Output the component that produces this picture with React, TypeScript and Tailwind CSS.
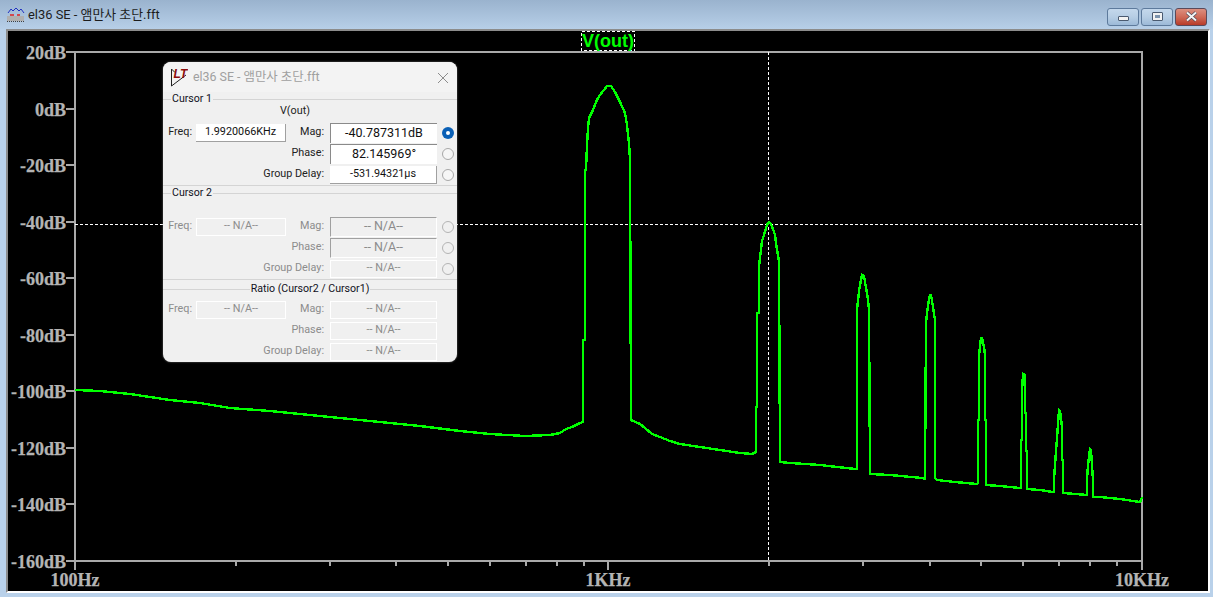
const yTicks = [
  ["20dB", 52],
  ["0dB", 108.6],
  ["-20dB", 165.1],
  ["-40dB", 221.7],
  ["-60dB", 278.2],
  ["-80dB", 334.8],
  ["-100dB", 391.3],
  ["-120dB", 447.9],
  ["-140dB", 504.4],
  ["-160dB", 561],
] as const;

const xTicks = [236, 330, 396, 448, 490, 526, 557, 584, 769, 863, 930, 981, 1023, 1059, 1090, 1117];

const trace = [
  [75, 390], [100, 391], [130, 394], [170, 400], [200, 403], [230, 408], [270, 411], [320, 416],
  [370, 421], [420, 426], [460, 431], [490, 434], [525, 436], [550, 435], [560, 433], [563, 431],
  [566, 429], [572, 427], [578, 424], [583, 422],
  [583, 340], [585, 340], [585, 170], [586, 170], [587, 145], [588, 128], [589, 118], [593, 110],
  [597, 100], [600, 95], [607, 86], [611, 86], [615, 92], [620, 102], [625, 113], [627, 125],
  [629, 143], [630, 160], [631, 420],
  [640, 424], [645, 428], [652, 434], [660, 437], [670, 441], [680, 444], [700, 447], [720, 450],
  [740, 453], [752, 454], [756, 452],
  [756, 407], [757, 407], [757, 313], [759, 313], [759, 266], [760, 258], [762, 241], [764, 235],
  [766, 228], [768, 223], [769, 222], [771, 224], [773, 229], [775, 235], [776, 243], [777, 250],
  [778, 255], [779, 262], [780, 462],
  [790, 463], [820, 465], [855, 469],
  [857, 469], [857, 309], [858, 301], [859, 291], [860, 285], [861, 280], [862, 275], [864, 276],
  [865, 282], [867, 293], [868, 300], [869, 310], [870, 474],
  [890, 475], [922, 478], [925, 479],
  [926, 322], [927, 314], [928, 305], [929, 300], [930, 295], [931, 295], [932, 301], [933, 307],
  [934, 314], [935, 320], [935, 478],
  [937, 480], [955, 482], [977, 484],
  [978, 483], [978, 420], [979, 420], [979, 355], [980, 347], [981, 338], [982, 338], [983, 342],
  [984, 347], [985, 355], [985, 420], [986, 420], [986, 485],
  [1000, 486], [1020, 488],
  [1021, 488], [1021, 440], [1022, 440], [1022, 391], [1023, 374], [1025, 375], [1025, 413],
  [1026, 413], [1026, 451], [1027, 451], [1027, 489],
  [1040, 490], [1053, 492],
  [1054, 492], [1054, 479], [1055, 465], [1056, 451], [1057, 438], [1058, 424], [1059, 410],
  [1060, 411], [1061, 419], [1062, 427], [1062, 460], [1063, 460], [1063, 493],
  [1075, 494], [1087, 495],
  [1087, 480], [1088, 465], [1090, 449], [1091, 450], [1092, 465], [1093, 481], [1093, 497],
  [1100, 497], [1120, 499], [1140, 502], [1141, 500], [1142, 497],
];

const tracePoints = trace.map((p) => p.join(",")).join(" ");

function AxisLabel({ x, y, anchor, children }: { x: number; y: number; anchor: "end" | "middle"; children: string }) {
  return (
    <text x={x} y={y} textAnchor={anchor} fill="#b4b4b4" stroke="#b4b4b4" strokeWidth="0.25" fontSize="18" fontWeight="700" fontFamily="'Liberation Serif', serif">
      {children}
    </text>
  );
}

function Plot() {
  return (
    <svg viewBox="8 31 1200 560" className="block w-[1200px] h-[560px]">
      <g fill="none" stroke="#a9a9a9" strokeWidth="2" shapeRendering="crispEdges">
        <rect x="75" y="52" width="1067" height="509" />
        <path d="M75 52V570M608 561V570M1142 561V570" />
        {yTicks.map(([label, y]) => (
          <path key={label} d={`M66 ${y}H75`} />
        ))}
        {xTicks.map((x) => (
          <path key={x} d={`M${x} 561V566`} />
        ))}
      </g>
      {yTicks.map(([label, y]) => (
        <AxisLabel key={label} x={66} y={y + 7} anchor="end">
          {label}
        </AxisLabel>
      ))}
      <AxisLabel x={75} y={586} anchor="middle">100Hz</AxisLabel>
      <AxisLabel x={608} y={586} anchor="middle">1KHz</AxisLabel>
      <AxisLabel x={1142} y={586} anchor="middle">10KHz</AxisLabel>

      <path d="M75 224H1142M768.5 52V561" fill="none" stroke="#fff" strokeWidth="1" strokeDasharray="3 2" shapeRendering="crispEdges" />
      <polyline points={tracePoints} fill="none" stroke="#00ff00" strokeWidth="2.4" shapeRendering="crispEdges" />

      <rect x="581.5" y="31.5" width="53" height="19" fill="none" stroke="#fff" strokeDasharray="3 2" shapeRendering="crispEdges" />
      <text x="608" y="47" textAnchor="middle" fill="#00ff00" fontSize="18" fontWeight="700" fontFamily="'Liberation Sans', sans-serif">
        V(out)
      </text>
    </svg>
  );
}

function WindowButton({ kind }: { kind: "min" | "max" | "close" }) {
  if (kind === "close") {
    return (
      <div className="w-[32px] h-[18px] rounded-[3px] border border-[#5a4a5a] bg-gradient-to-b from-[#dc8f80] via-[#cf6a58] to-[#b83a28] flex items-center justify-center">
        <svg width="13" height="11" viewBox="0 0 13 11">
          <path d="M2 1.5L11 9.5M11 1.5L2 9.5" stroke="#4a4a5a" strokeWidth="3.4" />
          <path d="M2 1.5L11 9.5M11 1.5L2 9.5" stroke="#f4f4f4" strokeWidth="2" />
        </svg>
      </div>
    );
  }
  return (
    <div className="w-[32px] h-[18px] rounded-[3px] border border-[#5d7a9c] bg-gradient-to-b from-[#c4d8ec] via-[#b6cde4] to-[#9cb9d8] flex items-center justify-center">
      {kind === "min" ? (
        <div className="w-[11px] h-[5px] mt-[3px] rounded-[1px] bg-[#f2f2f2] border border-[#4a5a70]" />
      ) : (
        <div className="w-[11px] h-[9px] rounded-[1px] bg-[#f2f2f2] border border-[#4a5a70] flex items-center justify-center">
          <div className="w-[5px] h-[3px] bg-[#7d94ae]" />
        </div>
      )}
    </div>
  );
}

function AppIcon() {
  return (
    <svg width="18" height="15" viewBox="0 0 18 15">
      <rect x="0" y="9" width="17" height="5" fill="#b0b0b0" />
      <path d="M0 14.5H17" stroke="#404040" strokeDasharray="1 1" />
      <path d="M1 6L4 2L6 4L9 1L12 4L14 2L17 6" fill="none" stroke="#2030c0" />
      <path d="M3 8H7M10 8H13" stroke="#e02020" strokeWidth="1.5" />
    </svg>
  );
}

function DialogIcon() {
  return (
    <svg width="17" height="19" viewBox="0 0 17 19">
      <path d="M0.5 1V18L15 7" fill="none" stroke="#202020" />
      <path d="M0.5 1L4 4.5" fill="none" stroke="#202020" />
      <text x="2.5" y="10" fontSize="12" fontWeight="700" fontStyle="italic" fill="#8c0c0c" fontFamily="'Liberation Sans', sans-serif">
        LT
      </text>
    </svg>
  );
}

type FieldKind = "raised" | "sunken" | "offRaised" | "offSunken";

function Field({ kind, wide, children }: { kind: FieldKind; wide?: boolean; children: string }) {
  const styles: Record<FieldKind, string> = {
    raised: "h-[18px] bg-white text-[#111] text-[10.8px] border-r border-b border-[#a0a0a0]",
    sunken: "h-[20px] bg-white text-[#111] text-[12.5px] border-t border-l border-[#8a8a8a]",
    offRaised: "h-[18px] bg-[#f0f0f0] text-[#8c8c8c] text-[10.8px] border border-white",
    offSunken: "h-[20px] bg-[#f0f0f0] text-[#8c8c8c] text-[12.5px] border-t border-l border-[#a0a0a0] border-r-white border-b-white border-r border-b",
  };
  return (
    <div className={`${wide ? "w-[107px]" : "w-[90px]"} flex items-center justify-center whitespace-nowrap ${styles[kind]}`}>
      {children}
    </div>
  );
}

function Radio({ state }: { state?: "on" | "off" | "disabled" }) {
  if (!state) return <div className="w-[12px] ml-[5px]" />;
  if (state === "on") {
    return (
      <div className="w-[12px] h-[12px] ml-[5px] rounded-full bg-[#0a60b6] flex items-center justify-center">
        <div className="w-[4px] h-[4px] rounded-full bg-white" />
      </div>
    );
  }
  return (
    <div className={`w-[12px] h-[12px] ml-[5px] rounded-full border ${state === "off" ? "bg-[#f6f6f6] border-[#a8a8a8]" : "bg-[#f0f0f0] border-[#b4b4b4]"}`} />
  );
}

function Row({ label, off, leftKind, leftValue, kind, value, radio }: {
  label: string;
  off: boolean;
  leftKind?: FieldKind;
  leftValue?: string;
  kind: FieldKind;
  value: string;
  radio?: "on" | "off" | "disabled";
}) {
  const textColor = off ? "text-[#8c8c8c]" : "text-[#222]";
  return (
    <div className="h-[21px] flex items-center text-[10.8px]">
      <div className={`w-[29px] text-right ${textColor}`}>{leftKind ? "Freq:" : ""}</div>
      <div className="w-[94px] pl-[4px]">
        {leftKind && <Field kind={leftKind}>{leftValue ?? ""}</Field>}
      </div>
      <div className={`w-[38px] flex justify-end whitespace-nowrap ${textColor}`}>{label}</div>
      <div className="ml-[6px]">
        <Field kind={kind} wide>{value}</Field>
      </div>
      <Radio state={radio} />
    </div>
  );
}

function GroupHeader({ label, center, className }: { label: string; center?: boolean; className: string }) {
  return (
    <div className={`relative flex items-center ${center ? "justify-center" : "pl-[8px]"} ${className}`}>
      <div className="absolute left-0 right-0 h-px bg-[#d4d4d4]" />
      <span className={`relative bg-[#f0f0f0] text-[#111122] text-[10.6px] leading-none px-px`}>{label}</span>
    </div>
  );
}

function CursorDialog() {
  return (
    <div className="absolute left-[163px] top-[62px] w-[294px] h-[300px] rounded-[8px] bg-[#f0f0f0] overflow-hidden shadow-[0_0_2px_#777] font-['Roboto',sans-serif]">
      <div className="h-[30px] bg-[#f3f3f3] flex items-center pl-[8px] pr-[8px] pt-[1px]">
        <DialogIcon />
        <span className="ml-[5px] text-[12.4px] text-[#a0a0a0] font-['Roboto','Noto_Sans_CJK_KR',sans-serif]">el36 SE - 앰만사 초단.fft</span>
        <svg className="ml-auto" width="12" height="12" viewBox="0 0 12 12">
          <path d="M1 1L11 11M11 1L1 11" stroke="#8c8c8c" strokeWidth="1" />
        </svg>
      </div>
      <GroupHeader label="Cursor 1" className="h-[14px]" />
      <div className="h-[16px] pl-[117px] text-[10.8px] leading-[10px] text-[#222]">V(out)</div>
      <Row off={false} label="Mag:" leftKind="raised" leftValue="1.9920066KHz" kind="sunken" value="-40.787311dB" radio="on" />
      <Row off={false} label="Phase:" kind="sunken" value="82.145969°" radio="off" />
      <Row off={false} label="Group Delay:" kind="raised" value="-531.94321µs" radio="off" />
      <div className="h-px bg-[#d4d4d4]" />
      <GroupHeader label="Cursor 2" className="h-[14px]" />
      <div className="h-[16px]" />
      <Row off label="Mag:" leftKind="offRaised" leftValue="-- N/A--" kind="offSunken" value="-- N/A--" radio="disabled" />
      <Row off label="Phase:" kind="offSunken" value="-- N/A--" radio="disabled" />
      <Row off label="Group Delay:" kind="offRaised" value="-- N/A--" radio="disabled" />
      <div className="h-px bg-[#d4d4d4]" />
      <GroupHeader label="Ratio (Cursor2 / Cursor1)" center className="h-[19px]" />
      <Row off label="Mag:" leftKind="offRaised" leftValue="-- N/A--" kind="offRaised" value="-- N/A--" />
      <Row off label="Phase:" kind="offRaised" value="-- N/A--" />
      <Row off label="Group Delay:" kind="offRaised" value="-- N/A--" />
    </div>
  );
}

export default function App() {
  return (
    <div className="relative w-[1213px] h-[597px] overflow-hidden bg-[#b9d1ea] flex flex-col">
      <div className="h-[29px] shrink-0 flex items-center pl-[7px] pr-[6px] bg-gradient-to-b from-[#9ab3ce] to-[#b7cfe8]">
        <AppIcon />
        <span className="ml-[3px] text-[12.9px] text-[#1c1c1c] font-['Roboto','Noto_Sans_CJK_KR',sans-serif]">el36 SE - 앰만사 초단.fft</span>
        <div className="ml-auto flex gap-[2px] mt-[4px]">
          <WindowButton kind="min" />
          <WindowButton kind="max" />
          <WindowButton kind="close" />
        </div>
      </div>
      <div className="ml-[6px] w-[1204px] h-[564px] border-t-2 border-l-2 border-t-[#8c8c8c] border-l-[#8c8c8c] border-r-2 border-b-2 border-r-white border-b-white bg-black">
        <Plot />
      </div>
      <CursorDialog />
    </div>
  );
}
